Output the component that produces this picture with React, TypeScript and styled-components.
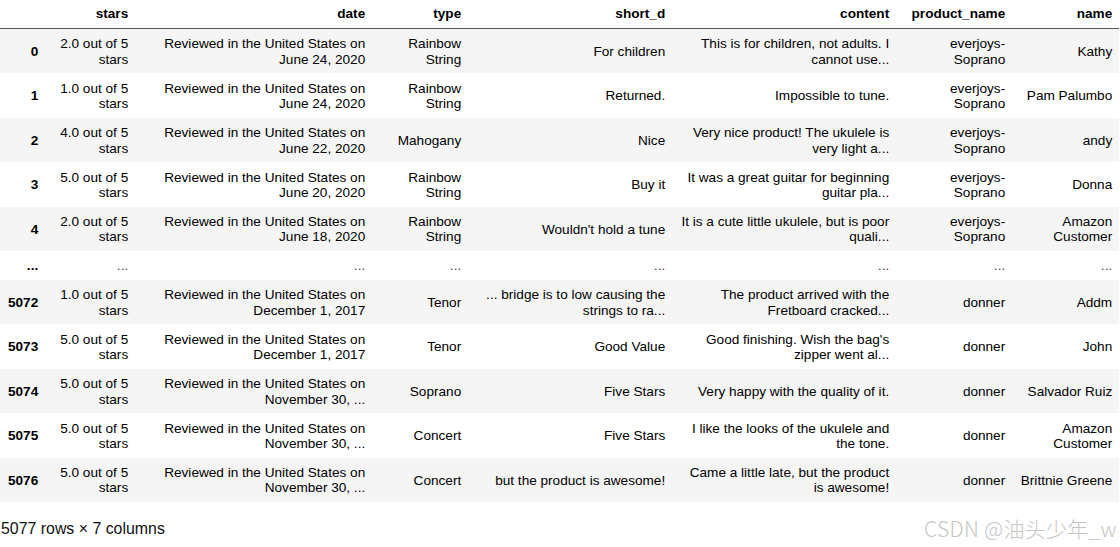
import React from "react";
import styled, { createGlobalStyle } from "styled-components";

const Global = createGlobalStyle`
  html, body { margin: 0; padding: 0; background: #fff; }
  body { font-family: "Liberation Sans", Arial, sans-serif; color: #000; }
`;

const Page = styled.div`
  position: relative;
  width: 1120px;
  height: 547px;
  overflow: hidden;
`;

const Table = styled.table`
  border-collapse: collapse;
  border-spacing: 0;
  table-layout: fixed;
  width: 1119px;
  font-size: 13.6px;
  line-height: 15.4px;
  color: #000;
`;

const HeadCell = styled.th`
  text-align: right;
  font-weight: bold;
  padding: 5.8px 6.8px 6.8px;
  border-bottom: 1px solid #555;
  vertical-align: bottom;
  white-space: nowrap;
`;

const Row = styled.tr<{ $striped: boolean }>`
  background: ${(p) => (p.$striped ? "#f5f5f5" : "#fff")};
`;

const IndexCell = styled.th`
  text-align: right;
  font-weight: bold;
  padding: 7.3px 6.8px 6.3px;
  vertical-align: middle;
`;

const Cell = styled.td<{ $ellipsis?: boolean }>`
  text-align: right;
  padding: 7.3px 6.8px 6.3px;
  vertical-align: middle;
  color: ${(p) => (p.$ellipsis ? "#444" : "#000")};
`;

const Footer = styled.p`
  margin: 18px 0 0 1px;
  font-size: 15.9px;
  line-height: 18px;
  color: #111;
`;

const Watermark = styled.div`
  position: absolute;
  right: 3px;
  bottom: 6px;
  font-family: "Noto Sans CJK SC", "Liberation Sans", sans-serif;
  font-weight: 300;
  font-size: 21px;
  line-height: 25px;
  color: #c6c6c6;
  letter-spacing: 0.3px;
`;

const columns = ["stars", "date", "type", "short_d", "content", "product_name", "name"];
const widths = [45, 90, 237, 96, 204, 224, 116, 107];

type Rec = { idx: string; vals: string[] };

const R = "Reviewed in the United States on ";

const rows: Rec[] = [
  { idx: "0", vals: ["2.0 out of 5 stars", R + "June 24, 2020", "Rainbow String", "For children", "This is for children, not adults. I cannot use...", "everjoys-Soprano", "Kathy"] },
  { idx: "1", vals: ["1.0 out of 5 stars", R + "June 24, 2020", "Rainbow String", "Returned.", "Impossible to tune.", "everjoys-Soprano", "Pam Palumbo"] },
  { idx: "2", vals: ["4.0 out of 5 stars", R + "June 22, 2020", "Mahogany", "Nice", "Very nice product! The ukulele is very light a...", "everjoys-Soprano", "andy"] },
  { idx: "3", vals: ["5.0 out of 5 stars", R + "June 20, 2020", "Rainbow String", "Buy it", "It was a great guitar for beginning guitar pla...", "everjoys-Soprano", "Donna"] },
  { idx: "4", vals: ["2.0 out of 5 stars", R + "June 18, 2020", "Rainbow String", "Wouldn't hold a tune", "It is a cute little ukulele, but is poor quali...", "everjoys-Soprano", "Amazon Customer"] },
  { idx: "...", vals: ["...", "...", "...", "...", "...", "...", "..."] },
  { idx: "5072", vals: ["1.0 out of 5 stars", R + "December 1, 2017", "Tenor", "... bridge is to low causing the strings to ra...", "The product arrived with the Fretboard cracked...", "donner", "Addm"] },
  { idx: "5073", vals: ["5.0 out of 5 stars", R + "December 1, 2017", "Tenor", "Good Value", "Good finishing. Wish the bag's zipper went al...", "donner", "John"] },
  { idx: "5074", vals: ["5.0 out of 5 stars", R + "November 30, ...", "Soprano", "Five Stars", "Very happy with the quality of it.", "donner", "Salvador Ruiz"] },
  { idx: "5075", vals: ["5.0 out of 5 stars", R + "November 30, ...", "Concert", "Five Stars", "I like the looks of the ukulele and the tone.", "donner", "Amazon Customer"] },
  { idx: "5076", vals: ["5.0 out of 5 stars", R + "November 30, ...", "Concert", "but the product is awesome!", "Came a little late, but the product is awesome!", "donner", "Brittnie Greene"] },
];

export default function App() {
  return (
    <Page>
      <Global />
      <Table>
        <colgroup>
          {widths.map((w, i) => (
            <col key={i} style={{ width: w }} />
          ))}
        </colgroup>
        <thead>
          <tr>
            <HeadCell />
            {columns.map((c) => (
              <HeadCell key={c}>{c}</HeadCell>
            ))}
          </tr>
        </thead>
        <tbody>
          {rows.map((r, i) => (
            <Row key={r.idx + i} $striped={i % 2 === 0}>
              <IndexCell>{r.idx}</IndexCell>
              {r.vals.map((v, j) => (
                <Cell key={j} $ellipsis={r.idx === "..."}>
                  {v}
                </Cell>
              ))}
            </Row>
          ))}
        </tbody>
      </Table>
      <Footer>5077 rows × 7 columns</Footer>
      <Watermark>CSDN @油头少年_w</Watermark>
    </Page>
  );
}
